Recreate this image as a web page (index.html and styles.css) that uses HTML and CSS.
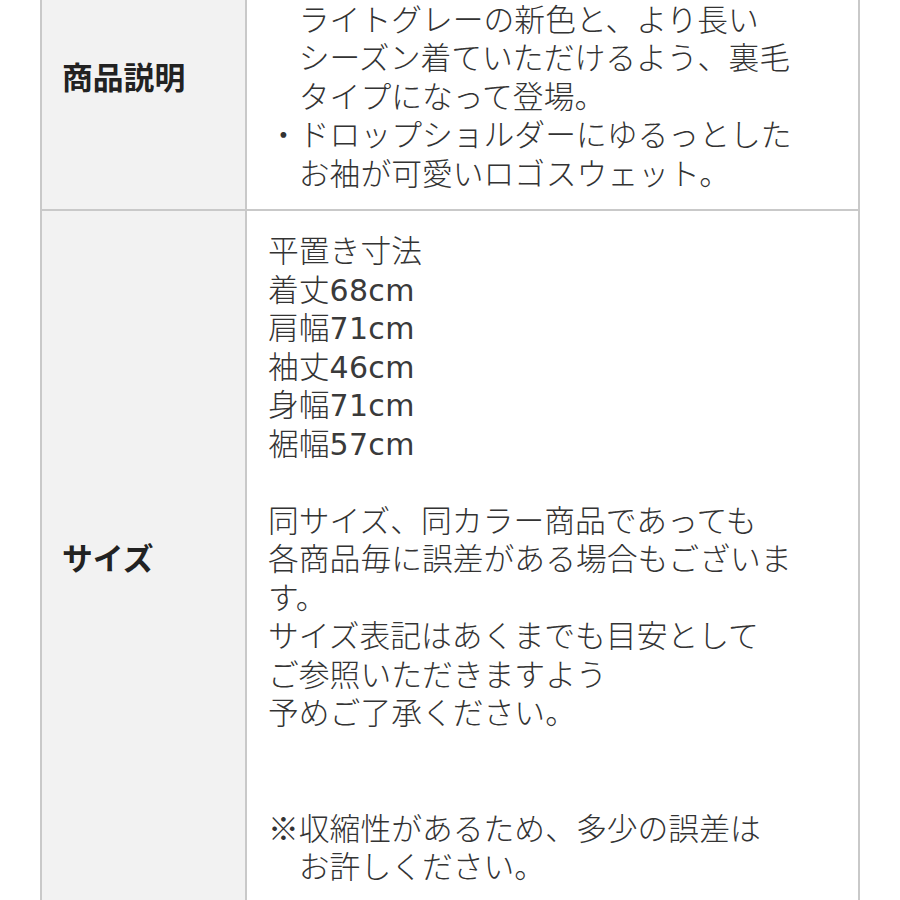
FILE: index.html
```html
<!DOCTYPE html>
<html lang="ja">
<head>
<meta charset="utf-8">
<title>商品情報</title>
<link rel="stylesheet" href="styles.css">
</head>
<body>
<div class="spec">
  <div class="head">商品説明</div>
  <div class="body">
    <p class="note">・人気のロゴスウェットに、<br>ライトグレーの新色と、より長い<br>シーズン着ていただけるよう、裏毛<br>タイプになって登場。</p>
    <p class="note">・ドロップショルダーにゆるっとした<br>お袖が可愛いロゴスウェット。</p>
  </div>
  <div class="head">サイズ</div>
  <div class="body">
    <p>平置き寸法<br>着丈<span class="lat">68cm</span><br>肩幅<span class="lat">71cm</span><br>袖丈<span class="lat">46cm</span><br>身幅<span class="lat">71cm</span><br>裾幅<span class="lat">57cm</span></p>
    <p class="blank">&nbsp;</p>
    <p>同サイズ、同カラー商品であっても<br>各商品毎に誤差がある場合もございま<br>す。<br>サイズ表記はあくまでも目安として<br>ご参照いただきますよう<br>予めご了承ください。</p>
    <p class="blank">&nbsp;</p>
    <p class="blank">&nbsp;</p>
    <p class="note">※収縮性があるため、多少の誤差は<br>お許しください。</p>
  </div>
</div>
</body>
</html>
```

FILE: styles.css
```css
html, body {
  margin: 0;
  padding: 0;
  background: #ffffff;
}
body {
  font-family: "Noto Sans CJK JP", "Noto Sans", sans-serif;
  color: #333333;
  overflow: hidden;
}
.spec {
  display: grid;
  grid-template-columns: 203px 611px;
  gap: 2px;
  padding: 2px;
  width: 816px;
  margin: -61px 0 0 40px;
  background: #c9c9c9;
}
.head {
  background: #f2f2f2;
  display: flex;
  align-items: center;
  padding-left: 20px;
  font-size: 30.8px;
  font-weight: 700;
  color: #222222;
}
.body {
  background: #ffffff;
  padding: 19px 20px 18px 21px;
  font-size: 30.8px;
  line-height: 38.5px;
  font-weight: 300;
}
.body p {
  margin: 0;
  white-space: nowrap;
}
.note {
  padding-left: 1em;
  text-indent: -1em;
}
.lat {
  font-family: "DejaVu Sans", "Noto Sans CJK JP", sans-serif;
  font-weight: 400;
  font-size: 30px;
  line-height: 1;
  letter-spacing: 0.3px;
  color: #3a3a3a;
}
```
